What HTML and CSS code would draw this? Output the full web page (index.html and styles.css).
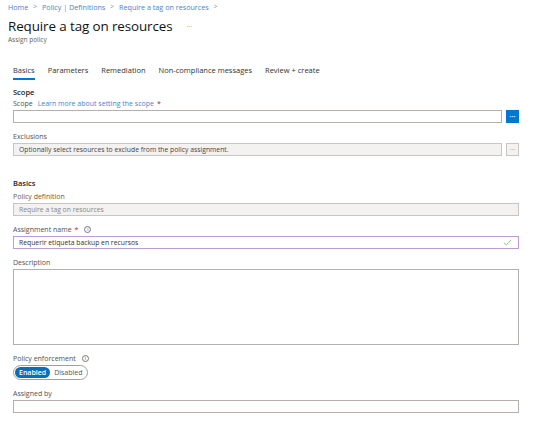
FILE: index.html
```html
<!DOCTYPE html>
<html lang="en">

<head>
    <meta charset="UTF-8">
    <meta name="viewport" content="width=device-width, initial-scale=1.0">
    <title>Assign policy</title>
    <link rel="stylesheet" href="styles.css">
</head>

<body>
    <div class="page">
        <div class="breadcrumb">
            <a>Home</a><span class="sep">&gt;</span>
            <a>Policy | Definitions</a><span class="sep">&gt;</span>
            <a>Require a tag on resources</a><span class="sep">&gt;</span>
        </div>

        <div class="title-row">
            <h1>Require a tag on resources</h1>
            <span class="more">&middot;&middot;&middot;</span>
        </div>
        <div class="subtitle">Assign policy</div>

        <div class="content">
            <ul class="tabs">
                <li class="active">Basics</li>
                <li>Parameters</li>
                <li>Remediation</li>
                <li>Non-compliance messages</li>
                <li>Review + create</li>
            </ul>

            <h2 class="section-title">Scope</h2>
            <div class="field">
                <label class="label">Scope <a class="link">Learn more about setting the scope</a> <span class="req">*</span></label>
                <div class="input-row">
                    <div class="input"></div>
                    <button class="pick-btn primary">&middot;&middot;&middot;</button>
                </div>
            </div>

            <div class="field">
                <label class="label">Exclusions</label>
                <div class="input-row">
                    <div class="input disabled">Optionally select resources to exclude from the policy assignment.</div>
                    <button class="pick-btn">&middot;&middot;&middot;</button>
                </div>
            </div>

            <h2 class="section-title basics-title">Basics</h2>
            <div class="field">
                <label class="label brown">Policy definition</label>
                <div class="input disabled muted">Require a tag on resources</div>
            </div>

            <div class="field">
                <label class="label">Assignment name <span class="req">*</span> <span class="info">i</span></label>
                <div class="input focused">
                    <span>Requerir etiqueta backup en recursos</span>
                    <svg class="check" width="9" height="7" viewBox="0 0 9 7">
                        <path d="M0.8 3.6 L3.3 6 L8.3 0.8" fill="none" stroke="#8cc78c" stroke-width="1"/>
                    </svg>
                </div>
            </div>

            <div class="field">
                <label class="label">Description</label>
                <div class="textarea"></div>
            </div>

            <div class="field">
                <label class="label">Policy enforcement <span class="info">i</span></label>
                <div class="toggle">
                    <span class="opt on">Enabled</span>
                    <span class="opt">Disabled</span>
                </div>
            </div>

            <div class="field">
                <label class="label">Assigned by</label>
                <div class="input"></div>
            </div>
        </div>
    </div>
</body>

</html>
```

FILE: styles.css
```css
* {
    margin: 0;
    padding: 0;
    box-sizing: border-box;
}

body {
    background-color: #fff;
    font-family: "Open Sans", "Noto Sans", sans-serif;
    color: #323130;
    font-size: 7px;
}

.page {
    padding: 2px 0 0 8px;
}

/* Breadcrumb */
.breadcrumb {
    font-size: 7.2px;
    color: #4b7fcf;
    height: 10px;
    line-height: 10px;
    display: flex;
    align-items: center;
}

.breadcrumb .sep {
    color: #8a8886;
    margin: 0 5px;
    font-size: 6.5px;
}

/* Title */
.title-row {
    display: flex;
    align-items: center;
    margin-top: 5px;
    height: 18px;
}

h1 {
    font-size: 13.4px;
    font-weight: 400;
    color: #111;
    letter-spacing: -0.1px;
}

.more {
    margin-left: 14px;
    color: #8a8886;
    font-size: 7px;
}

.subtitle {
    font-size: 6.5px;
    color: #605e5c;
}

.content {
    padding: 0 22px 0 5px;
}

/* Tabs */
.tabs {
    list-style: none;
    display: flex;
    gap: 13px;
    margin-top: 21px;
    font-size: 7.5px;
    color: #323130;
}

.tabs li {
    padding-bottom: 3px;
    border-bottom: 2px solid transparent;
}

.tabs li.active {
    border-bottom-color: #0078d4;
}

/* Sections */
.section-title {
    font-size: 7.5px;
    font-weight: 600;
    color: #222;
    margin-top: 7px;
}

.basics-title {
    margin-top: 22px;
}

.field {
    margin-top: 1px;
}

.basics-title + .field {
    margin-top: 3px;
}

.field + .field {
    margin-top: 8px;
}

.label {
    display: flex;
    align-items: center;
    gap: 3px;
    font-size: 7px;
    color: #505050;
    height: 10px;
    margin-bottom: 2px;
}

.label.brown {
    color: #7a5632;
}

.link {
    color: #4b7fcf;
    margin-left: 2px;
}

.req {
    color: #a4262c;
}

.info {
    display: inline-flex;
    align-items: center;
    justify-content: center;
    width: 7px;
    height: 7px;
    border: 0.8px solid #777;
    border-radius: 50%;
    font-size: 5px;
    color: #555;
    margin-left: 3px;
}

/* Inputs */
.input-row {
    display: flex;
    gap: 4px;
}

.input {
    flex: 1;
    height: 13px;
    border: 1px solid #b3b0ad;
    background-color: #fff;
    display: flex;
    align-items: center;
    justify-content: space-between;
    padding: 0 6px 0 5px;
    font-size: 6.8px;
    color: #323130;
}

.input.disabled {
    background-color: #f3f2f1;
    border-color: #c8c6c4;
    color: #444;
}

.input.muted {
    color: #8a8886;
}

.input.focused {
    border-color: #b99dd4;
}

.pick-btn {
    width: 13px;
    height: 13px;
    border: 1px solid #c8c6c4;
    background-color: #f3f2f1;
    color: #8a8886;
    font-size: 7px;
    line-height: 10px;
    font-family: inherit;
}

.pick-btn.primary {
    background-color: #0078d4;
    border-color: #0078d4;
    color: #fff;
    font-weight: 700;
}

.textarea {
    height: 76px;
    border: 1px solid #b3b0ad;
}

/* Toggle */
.toggle {
    display: inline-flex;
    align-items: center;
    height: 15px;
    padding: 1px;
    border: 1px solid #a19f9d;
    border-radius: 8px;
    font-size: 7px;
}

.toggle .opt {
    padding: 0 4px;
    height: 11px;
    line-height: 11px;
    border-radius: 6px;
    color: #555;
}

.toggle .opt.on {
    background-color: #0f6cbd;
    color: #fff;
    font-weight: 600;
}
```
